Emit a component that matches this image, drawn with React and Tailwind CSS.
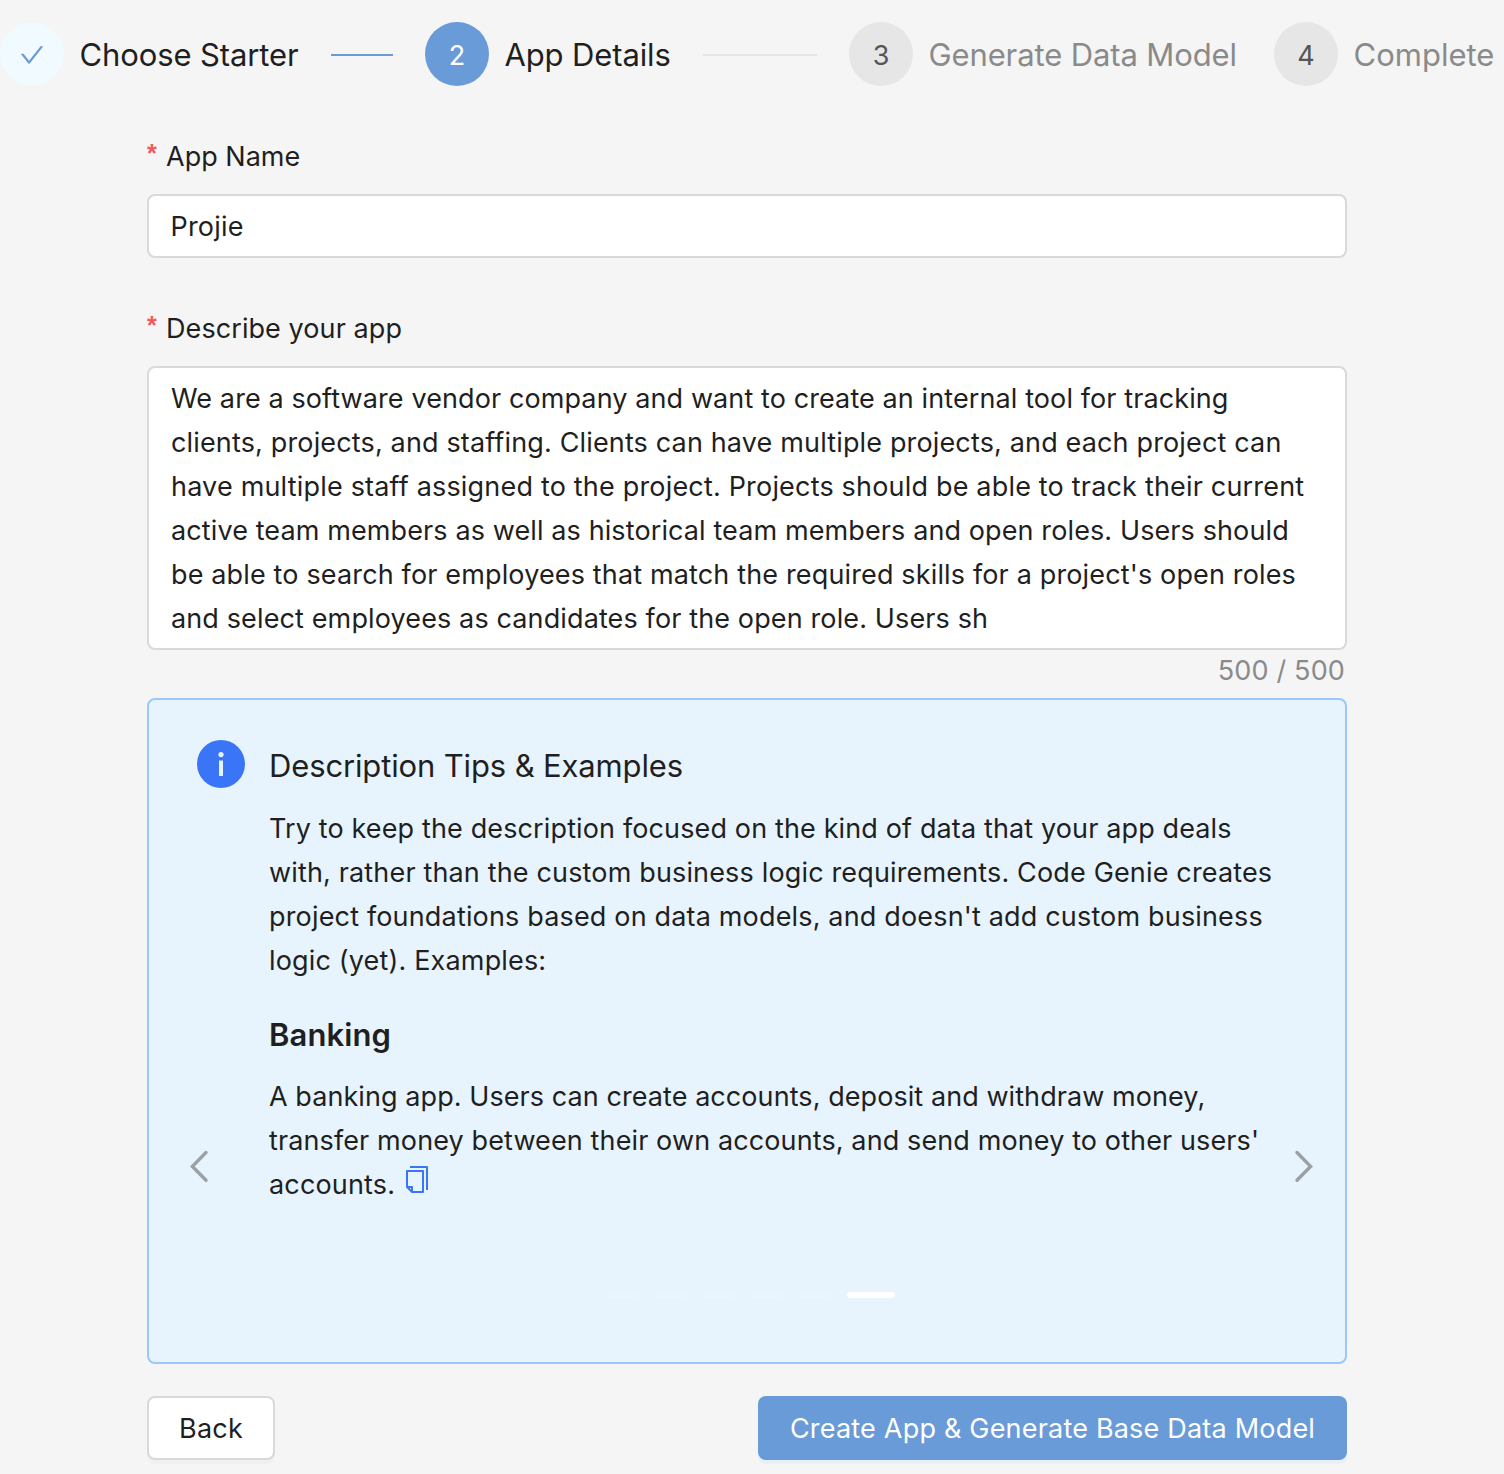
import React from "react";
import { AiOutlineCheck } from "react-icons/ai";

const steps = [
  { title: "Choose Starter", status: "done", width: "w-[425px]", tracking: "tracking-[-0.11px]", line: "ml-[32.5px] w-[62px] bg-[#699bd8]" },
  { title: "App Details", status: "active", width: "w-[424px]", tracking: "tracking-[-0.123px]", line: "ml-[32.5px] w-[114px] bg-[#e4e4e4]" },
  { title: "Generate Data Model", status: "wait", width: "w-[425px]", tracking: "tracking-[-0.119px]" },
  { title: "Complete", status: "wait", width: "w-[230px]", tracking: "tracking-[0.01px]" },
];

const titleWidths = ["w-[219px]", "w-[166px]", "w-[308px]", "w-[141px]"];

const circleStyles = {
  done: "bg-[#f0faff] text-[#699bd8]",
  active: "bg-[#699bd8] text-white",
  wait: "bg-[#e6e6e6] text-[#555]",
};

const descriptionLines = [
  ["We are a software vendor company and want to create an internal tool for tracking", "tracking-[0.1px]"],
  ["clients, projects, and staffing. Clients can have multiple projects, and each project can", "tracking-[0.15px]"],
  ["have multiple staff assigned to the project. Projects should be able to track their current", "tracking-[0.185px]"],
  ["active team members as well as historical team members and open roles. Users should", "tracking-[0.108px]"],
  ["be able to search for employees that match the required skills for a project's open roles", "tracking-[0.147px]"],
  ["and select employees as candidates for the open role. Users sh", "tracking-[0.125px]"],
];

const tipLines = [
  ["Try to keep the description focused on the kind of data that your app deals", "tracking-[0.13px]"],
  ["with, rather than the custom business logic requirements. Code Genie creates", "tracking-[0.155px]"],
  ["project foundations based on data models, and doesn't add custom business", "tracking-[0.165px]"],
  ["logic (yet). Examples:", "tracking-[0.16px]"],
];

const exampleLines = [
  ["A banking app. Users can create accounts, deposit and withdraw money,", "tracking-[0.07px]"],
  ["transfer money between their own accounts, and send money to other users'", "tracking-[0.114px]"],
];

function Lines({ lines }) {
  return lines.map(([text, tracking]) => (
    <span key={text} className={`block whitespace-nowrap ${tracking}`}>
      {text}
    </span>
  ));
}

function Step({ step, index }) {
  return (
    <li className={`flex shrink-0 items-center ${step.width}`}>
      <span className={`flex size-16 shrink-0 items-center justify-center rounded-full pt-0.5 text-[27px] leading-none ${circleStyles[step.status]}`}>
        {step.status === "done" ? <AiOutlineCheck className="size-7" /> : index + 1}
      </span>
      <span
        className={`ml-[15.5px] shrink-0 pt-0.5 text-[31px] leading-16 whitespace-nowrap ${titleWidths[index]} ${step.tracking} ${
          step.status === "wait" ? "text-[#8a8a8a]" : "text-[#1f1f1f]"
        }`}
      >
        {step.title}
      </span>
      {step.line && <span className={`mt-0.5 h-0.5 shrink-0 ${step.line}`} />}
    </li>
  );
}

function Label({ children, tracking }) {
  return (
    <label className={`flex h-11 items-center pt-0.5 ${tracking}`}>
      <span className="mr-2 w-[11px] pb-2 font-['Liberation_Sans',sans-serif] leading-10 font-bold text-[#f05a5a] text-[25px]">*</span>
      {children}
    </label>
  );
}

function CopyIcon() {
  return (
    <svg className="mt-0.5 ml-2.5 shrink-0" width="24" height="30" viewBox="0 0 24 30" fill="none" stroke="#3975f6" strokeWidth="2" strokeLinejoin="round">
      <path d="M5 2H22V25" />
      <path d="M2 6H18V27H7L2 22Z" />
      <path d="M2 22H7V27" />
    </svg>
  );
}

function Arrow({ direction }) {
  return (
    <button aria-label={direction} className="block text-[#9aa1a6]">
      <svg width="20" height="34" viewBox="0 0 20 34" fill="none" stroke="currentColor" strokeWidth="3.4" strokeLinecap="round" strokeLinejoin="miter">
        <path d={direction === "Previous" ? "M17 3.5 L3.4 17.4 L17 31.3" : "M3 3.5 L16.6 17.4 L3 31.3"} />
      </svg>
    </button>
  );
}

export default function App() {
  return (
    <main className="h-[1474px] w-[1504px] overflow-hidden bg-[#f5f5f5] font-['Inter',sans-serif] text-[27px] leading-11 text-[#1f1f1f]">
      <ol className="flex h-[86px] pt-[22px]">
        {steps.map((step, i) => (
          <Step key={step.title} step={step} index={i} />
        ))}
      </ol>

      <div className="ml-[147px] flex w-[1200px] flex-col pt-12">
        <Label tracking="tracking-[0px]">App Name</Label>
        <div className="mt-4 flex h-16 items-center rounded-lg border-2 border-[#d9d9d9] bg-white px-[21.5px] pt-0.5 tracking-[0.2px]">
          Projie
        </div>

        <div className="mt-12">
          <Label tracking="tracking-[0.08px]">Describe your app</Label>
        </div>
        <div className="mt-4 h-[284px] rounded-lg border-2 border-[#d9d9d9] bg-white px-[22px] pt-[9px]">
          <Lines lines={descriptionLines} />
        </div>
        <div className="h-12 pr-0.5 text-right tracking-[0.15px] text-[#8a8a8a]">
          <span className="block leading-[42px]">500 / 500</span>
        </div>

        <section className="flex h-[666px] rounded-lg border-2 border-[#9bc7fb] bg-[#e7f4fe] pt-10 pl-12">
          <svg className="shrink-0" width="48" height="48" viewBox="0 0 48 48">
            <circle cx="24" cy="24" r="24" fill="#3975f6" />
            <circle cx="24" cy="14.6" r="2.6" fill="#e7f4fe" />
            <path d="M22 20.5h4v15.5h-4z" fill="#e7f4fe" />
          </svg>
          <div className="relative ml-6 w-[1006px]">
            <h2 className="pt-0.5 text-[31px] leading-12 tracking-[-0.14px]">Description Tips &amp; Examples</h2>
            <p className="mt-[17px]">
              <Lines lines={tipLines} />
            </p>
            <h3 className="mt-[22px] text-[31px] leading-[60px] font-semibold tracking-[0.1px]">Banking</h3>
            <p className="mt-[10px]">
              <Lines lines={exampleLines} />
              <span className="flex h-11 tracking-[0.15px]">
                accounts.
                <CopyIcon />
              </span>
            </p>
            <div className="absolute top-[409px] -left-[80px]">
              <Arrow direction="Previous" />
            </div>
            <div className="absolute top-[409px] left-[1025px]">
              <Arrow direction="Next" />
            </div>
            <div className="mt-[85px] ml-[338px] flex gap-4">
              {[0, 1, 2, 3, 4].map((i) => (
                <span key={i} className="h-1.5 w-8 rounded-full bg-[#ebf5fe]" />
              ))}
              <span className="h-1.5 w-12 rounded-full bg-white" />
            </div>
          </div>
        </section>

        <div className="mt-8 flex justify-between">
          <button className="flex h-16 w-32 items-center justify-center rounded-lg border-2 border-[#d9d9d9] bg-white pt-0.5 tracking-[0.2px] shadow-[0_4px_0_rgba(0,0,0,0.02)]">
            Back
          </button>
          <button className="flex h-16 w-[589px] items-center justify-center rounded-lg bg-[#699bd8] pt-0.5 tracking-[0.2px] whitespace-nowrap text-white shadow-[0_4px_0_rgba(5,145,255,0.05)]">
            Create App &amp; Generate Base Data Model
          </button>
        </div>
      </div>
    </main>
  );
}
